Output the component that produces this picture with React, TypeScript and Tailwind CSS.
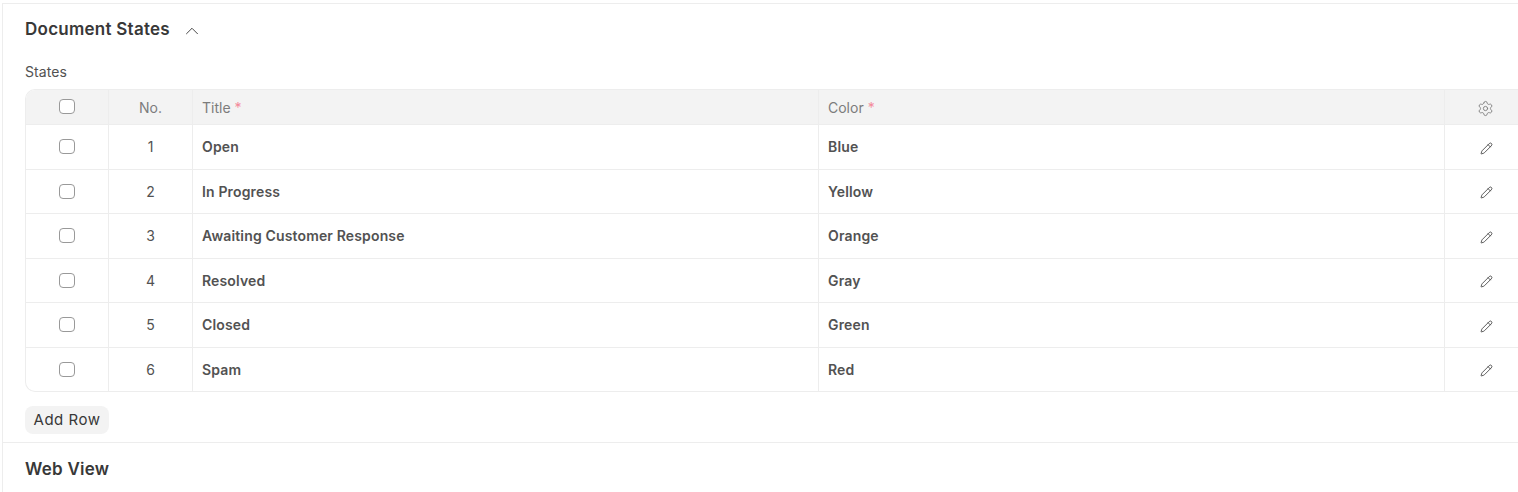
import { ChevronUp, Settings, Pencil } from "lucide-react";

const rows = [
  { no: 1, title: "Open", color: "Blue" },
  { no: 2, title: "In Progress", color: "Yellow" },
  { no: 3, title: "Awaiting Customer Response", color: "Orange" },
  { no: 4, title: "Resolved", color: "Gray" },
  { no: 5, title: "Closed", color: "Green" },
  { no: 6, title: "Spam", color: "Red" },
];

function Checkbox() {
  return <div className="w-4 h-[15px] rounded-[4px] border border-[#999999] bg-white" />;
}

export default function App() {
  return (
    <div className="h-[492px] w-[1518px] overflow-hidden bg-white font-['Inter',sans-serif] text-[#383838] pt-[3px] pl-[2px]">
      <div className="border-l border-t border-[#ededed] h-full">
        {/* Document States section */}
        <div className="pl-[22px] border-b border-[#ededed] h-[439px]">
          <div className="flex items-center h-[50px]">
            <h2 className="text-[17px] font-semibold leading-none tracking-[0.25px] text-[#383838]">Document States</h2>
            <ChevronUp className="w-[22px] h-[22px] ml-[11px] mt-[3px] text-[#383838]" strokeWidth={1} />
          </div>
          <div className="text-sm leading-none tracking-[0.1px] text-[#525252] mt-[11px] mb-[10px]">States</div>

          <div className="border border-[#ededed] border-r-0 rounded-l-[10px] overflow-hidden w-[1494px]">
            <div className="flex h-[34px] bg-[#f3f3f3] text-sm text-[#7c7c7c]">
              <div className="w-[83px] flex items-center justify-center border-r border-[#ededed] pb-[2px]">
                <Checkbox />
              </div>
              <div className="w-[84px] flex items-center justify-center border-r border-[#ededed] pt-[2px]">No.</div>
              <div className="w-[626px] flex items-center px-[9px] border-r border-[#ededed] pt-[2px]">
                Title <span className="text-[#f48a9a] ml-[4px]">*</span>
              </div>
              <div className="w-[626px] flex items-center px-[9px] border-r border-[#ededed] pt-[2px]">
                Color <span className="text-[#f48a9a] ml-[4px]">*</span>
              </div>
              <div className="flex-1 flex items-center pl-[32px] pt-[2px]">
                <Settings className="w-[17px] h-[17px] text-[#7c7c7c]" strokeWidth={1.25} />
              </div>
            </div>
            {rows.map((row) => (
              <div key={row.no} className="flex h-[44.5px] border-t border-[#ededed] text-sm text-[#525252]">
                <div className="w-[83px] flex items-center justify-center border-r border-[#ededed]">
                  <Checkbox />
                </div>
                <div className="w-[84px] flex items-center justify-center border-r border-[#ededed] pt-[1px]">{row.no}</div>
                <div className="w-[626px] flex items-center px-[9px] border-r border-[#ededed] font-semibold tracking-[0.15px] pt-[1px]">{row.title}</div>
                <div className="w-[626px] flex items-center px-[9px] border-r border-[#ededed] font-semibold tracking-[0.15px] pt-[1px]">{row.color}</div>
                <div className="flex-1 flex items-center pl-[35px] pt-[3px]">
                  <Pencil className="w-[13px] h-[13px] text-[#383838]" strokeWidth={1.5} />
                </div>
              </div>
            ))}
          </div>

          <button className="mt-[14px] h-[28px] w-[84px] rounded-[8px] bg-[#f3f3f3] text-[15px] leading-none text-[#383838] tracking-[0.5px] pb-[2px]">
            Add Row
          </button>
        </div>

        {/* Web View section */}
        <div className="pl-[22px] pt-[16px]">
          <h2 className="text-[17px] font-semibold leading-[20px] tracking-[0.25px] text-[#383838]">Web View</h2>
        </div>
      </div>
    </div>
  );
}
